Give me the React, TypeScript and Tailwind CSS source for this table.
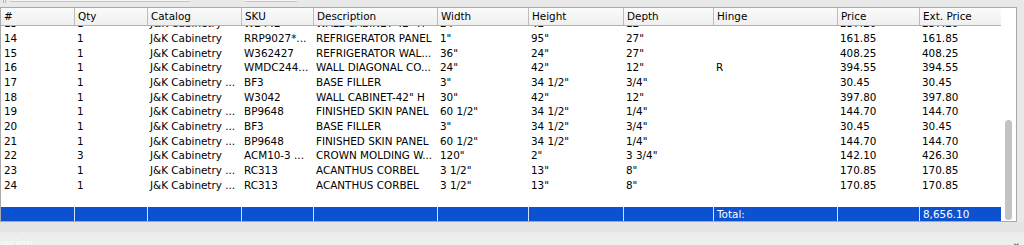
import React from "react";

const cols = [73, 73, 94, 72, 124, 91, 95, 90, 124, 82, 82];
const headers = ["#", "Qty", "Catalog", "SKU", "Description", "Width", "Height", "Depth", "Hinge", "Price", "Ext. Price"];

const rows: string[][] = [
  ["13", "1", "J&K Cabinetry", "W2442", 'WALL CABINET-42" H', '24"', '42"', '12"', "", "237.20", "237.20"],
  ["14", "1", "J&K Cabinetry", "RRP9027*...", "REFRIGERATOR PANEL", '1"', '95"', '27"', "", "161.85", "161.85"],
  ["15", "1", "J&K Cabinetry", "W362427", "REFRIGERATOR WAL...", '36"', '24"', '27"', "", "408.25", "408.25"],
  ["16", "1", "J&K Cabinetry", "WMDC244...", "WALL DIAGONAL CO...", '24"', '42"', '12"', "R", "394.55", "394.55"],
  ["17", "1", "J&K Cabinetry ...", "BF3", "BASE FILLER", '3"', '34 1/2"', '3/4"', "", "30.45", "30.45"],
  ["18", "1", "J&K Cabinetry", "W3042", 'WALL CABINET-42" H', '30"', '42"', '12"', "", "397.80", "397.80"],
  ["19", "1", "J&K Cabinetry ...", "BP9648", "FINISHED SKIN PANEL", '60 1/2"', '34 1/2"', '1/4"', "", "144.70", "144.70"],
  ["20", "1", "J&K Cabinetry ...", "BF3", "BASE FILLER", '3"', '34 1/2"', '3/4"', "", "30.45", "30.45"],
  ["21", "1", "J&K Cabinetry ...", "BP9648", "FINISHED SKIN PANEL", '60 1/2"', '34 1/2"', '1/4"', "", "144.70", "144.70"],
  ["22", "3", "J&K Cabinetry", "ACM10-3 ...", "CROWN MOLDING W...", '120"', '2"', '3 3/4"', "", "142.10", "426.30"],
  ["23", "1", "J&K Cabinetry ...", "RC313", "ACANTHUS CORBEL", '3 1/2"', '13"', '8"', "", "170.85", "170.85"],
  ["24", "1", "J&K Cabinetry ...", "RC313", "ACANTHUS CORBEL", '3 1/2"', '13"', '8"', "", "170.85", "170.85"],
];

const footer = ["", "", "", "", "", "", "", "", "Total:", "", "8,656.10"];

export default function App() {
  return (
    <div className="w-[1024px] h-[245px] overflow-hidden bg-[#e8e8e8] font-['DejaVu_Sans',sans-serif] text-[10.4px] text-black">
      {/* top strip */}
      <div className="h-[7px] flex items-start bg-[#e9e9e9]">
        <div className="ml-[3px] mt-0 h-[3px] w-[3px] border-l border-r border-[#b5b5b5]" />
        <div className="ml-[4px] h-[2px] w-[180px] bg-[#f6f6f6] border-b border-[#c4c4c4]" />
        <div className="ml-[55px] h-[2px] w-[52px] bg-[#f6f6f6] border-b border-[#c4c4c4]" />
      </div>

      <div className="flex">
        {/* table pane */}
        <div className="flex w-[1017px] border-l border-r border-t border-[#a9a9a9] bg-white">
          <div className="w-[1000px] flex flex-col">
            {/* header */}
            <div className="flex h-[18px] border-b border-[#b3b3b3] bg-gradient-to-b from-[#fbfbfb] to-[#efefef]">
              {headers.map((h, i) => (
                <div
                  key={i}
                  style={{ width: cols[i] }}
                  className={`shrink-0 flex items-center pl-[3px] leading-none whitespace-nowrap overflow-hidden ${i > 0 ? "border-l border-[#bdbdbd]" : ""}`}
                >
                  {h}
                </div>
              ))}
            </div>
            {/* body */}
            <div className="h-[181px] overflow-hidden">
              <div className="mt-[-9.7px]">
                {rows.map((r, ri) => (
                  <div key={ri} className="flex h-[14.67px]">
                    {r.map((c, ci) => (
                      <div
                        key={ci}
                        style={{ width: cols[ci] }}
                        className={`shrink-0 flex items-center leading-none whitespace-nowrap overflow-hidden ${ci === 0 ? "pl-[3px]" : "pl-[3px]"}`}
                      >
                        {c}
                      </div>
                    ))}
                  </div>
                ))}
              </div>
            </div>
            {/* footer */}
            <div className="flex h-[15px] bg-[#0b51d0] border-b border-[#a9a9a9] text-white">
              {footer.map((c, i) => (
                <div
                  key={i}
                  style={{ width: cols[i] }}
                  className={`shrink-0 flex items-center pl-[3px] leading-none whitespace-nowrap ${i > 0 ? "border-l border-[#d4e0f7]" : ""}`}
                >
                  {c}
                </div>
              ))}
            </div>
          </div>
          {/* scrollbar */}
          <div className="w-[15px] flex flex-col bg-white border-b border-[#a9a9a9]">
            <div className="flex-1" />
            <div className="ml-[4px] mb-[1px] w-[7px] h-[100px] rounded-full bg-[#c3c3c3]" />
          </div>
        </div>
        <div className="flex-1" />
      </div>

      {/* bottom area */}
      <div className="h-[10px] bg-[#e4e4e4]" />
      <div className="h-[20px] bg-gradient-to-b from-[#ebebeb] to-[#f1f1f1] flex items-start justify-between">
        <span className="ml-[-8px] mt-[6px] text-[12px] leading-none text-[#fafafa]">Design</span>
        <span className="mr-[3px] mt-[5px] text-[11px] leading-none text-[#555]">⌄</span>
      </div>
    </div>
  );
}
